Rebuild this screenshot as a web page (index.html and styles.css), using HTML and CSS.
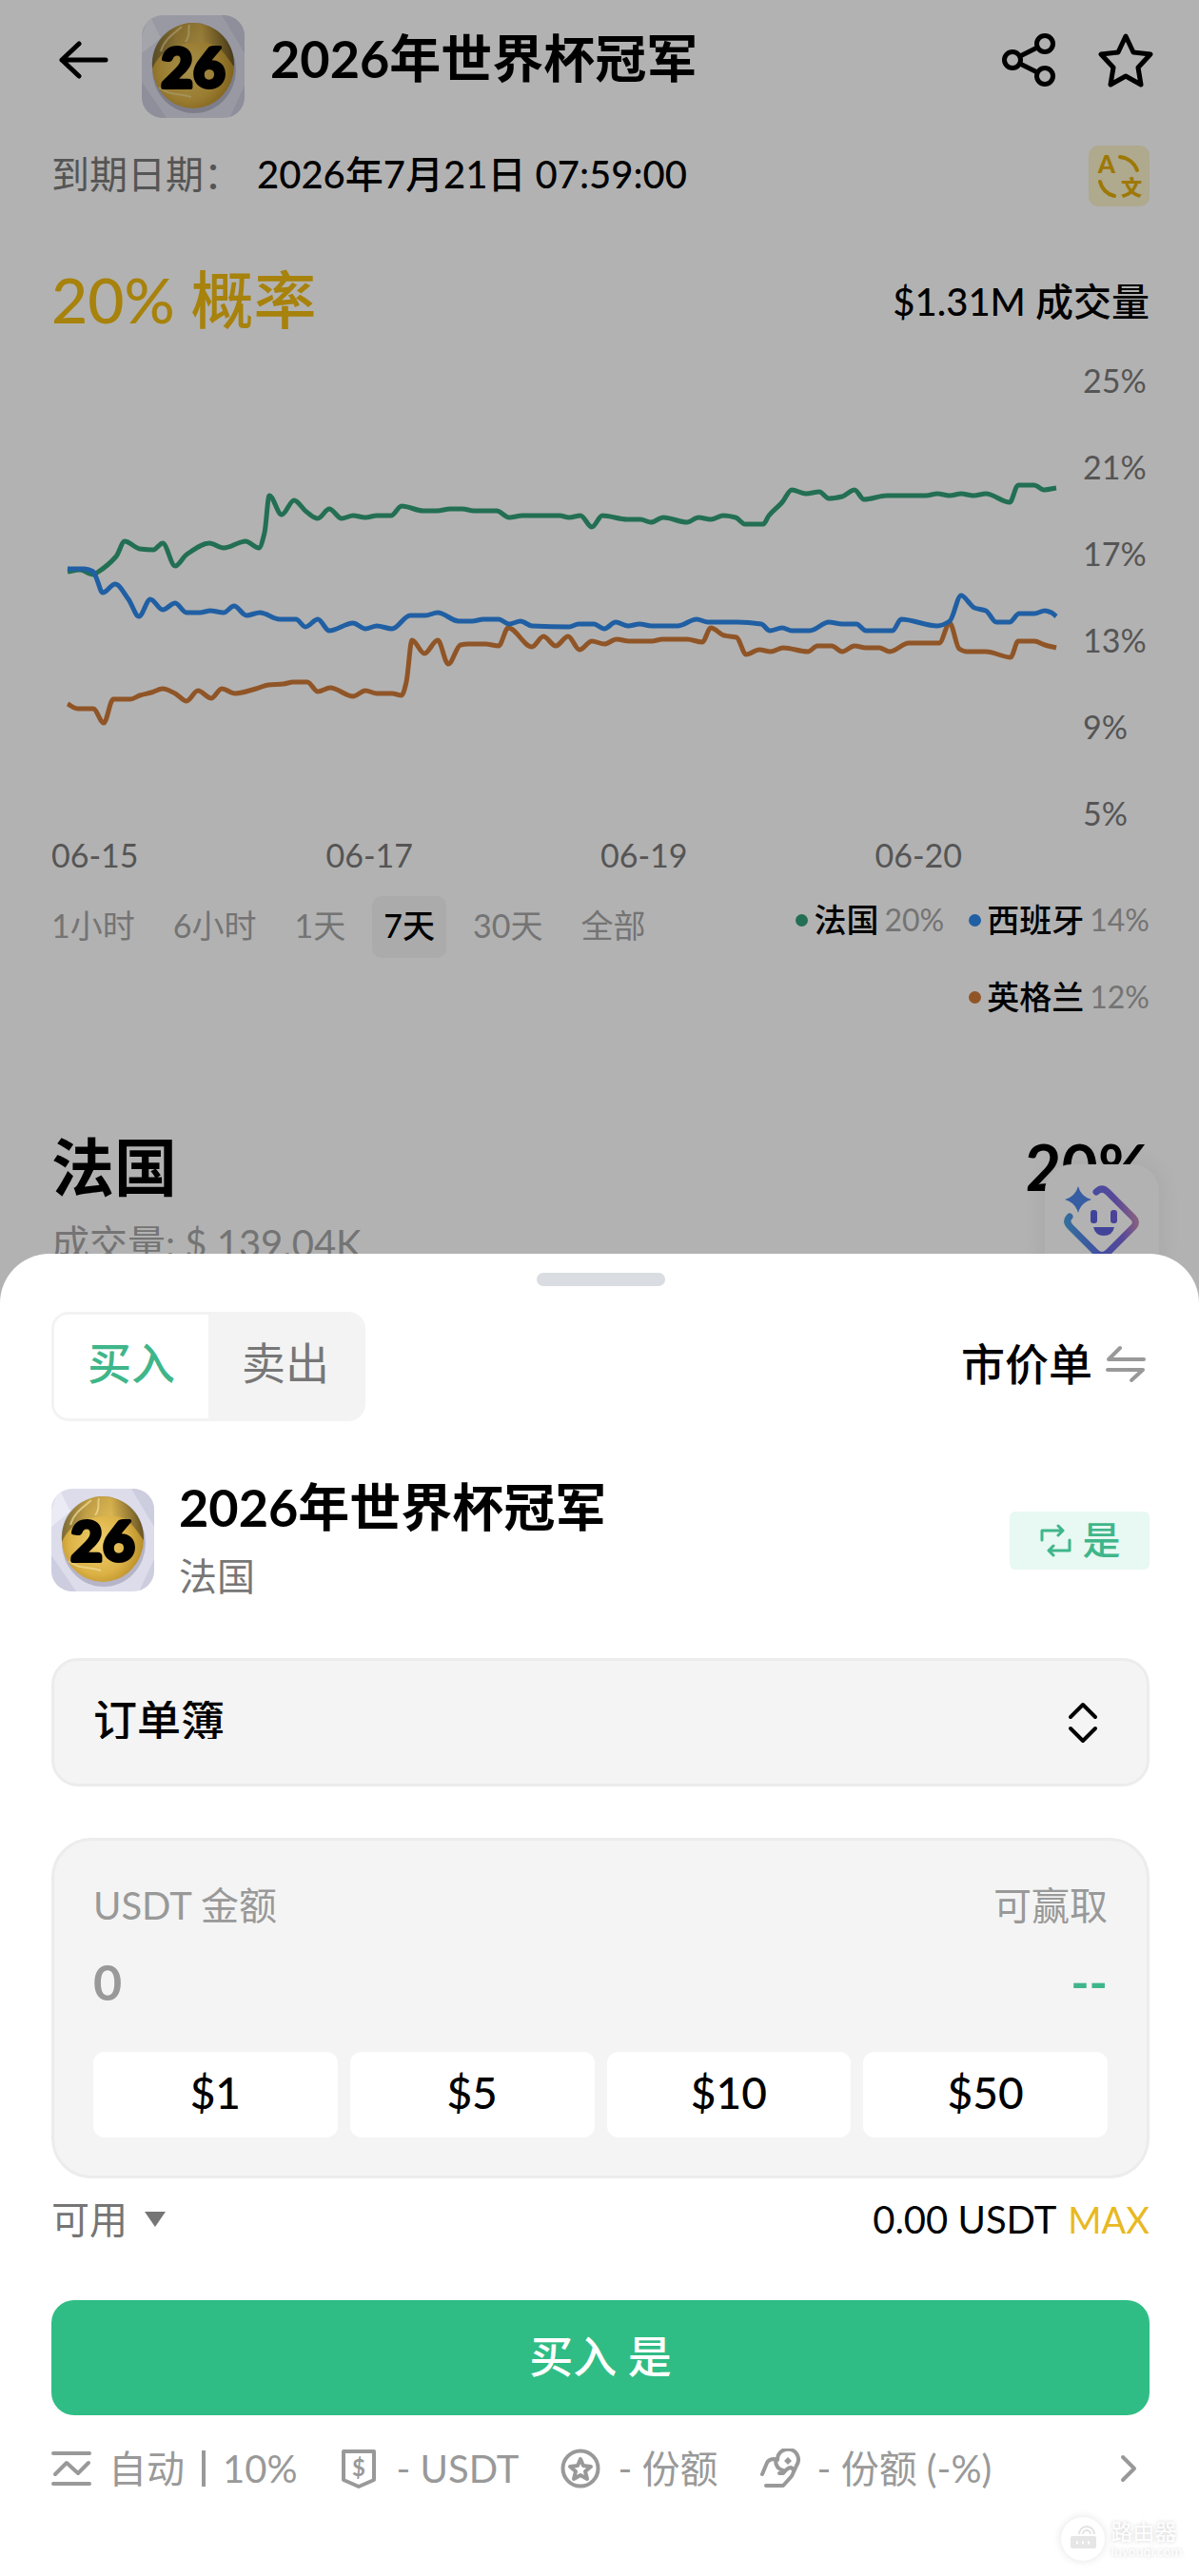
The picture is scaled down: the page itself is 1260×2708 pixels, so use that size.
FILE: index.html
```html
<!DOCTYPE html>
<html lang="zh-CN">
<head>
<meta charset="utf-8">
<meta name="viewport" content="width=device-width, initial-scale=1">
<title>2026年世界杯冠军</title>
<link rel="stylesheet" href="styles.css">
</head>
<body>
<svg class="defs" width="0" height="0" aria-hidden="true">
  <defs>
    <radialGradient id="gold" cx="45%" cy="55%" r="60%">
      <stop offset="0" stop-color="#f0cf6c"/>
      <stop offset="0.6" stop-color="#dcb246"/>
      <stop offset="0.9" stop-color="#b98f2a"/>
      <stop offset="1" stop-color="#6b4d12"/>
    </radialGradient>
    <linearGradient id="shade" x1="0" y1="0" x2="1" y2="0">
      <stop offset="0" stop-color="#5b5334"/>
      <stop offset="0.3" stop-color="#b89a48"/>
      <stop offset="0.6" stop-color="#dab758"/>
      <stop offset="1" stop-color="#473c1f"/>
    </linearGradient>
    <symbol id="ball" viewBox="0 0 108 108">
      <rect width="108" height="108" fill="#dcdcea"/>
      <path d="M0 70L26 108H0zM84 0h24v40zM92 108l16-34v34z" fill="#cdcde0"/>
      <path d="M8 0l12 24L0 40V22z" fill="#ebebf5"/>
      <ellipse cx="55" cy="57" rx="44" ry="46" fill="#8d8ba6" opacity="0.5"/>
      <ellipse cx="54" cy="53" rx="43" ry="45" fill="url(#gold)"/>
      <path d="M11 56C9 28 28 9 54 8c26 1 44 20 43 46-8-10-14-24-30-25-22-2-46 4-56 27z" fill="url(#shade)" opacity="0.7"/>
      <path d="M42 12c-6 6-18 12-22 26M50 10c-2 6 2 10-4 18M18 76c10 8 20 6 34 10" fill="none" stroke="#f1dc98" stroke-width="2" opacity="0.7"/>
      <text x="54" y="76" text-anchor="middle" class="ball-text">26</text>
    </symbol>
  </defs>
</svg>

<div class="app">
  <main class="market">
    <header class="topbar">
      <button class="icon-btn back" type="button" aria-label="返回">
        <svg width="52" height="40" viewBox="0 0 52 40"><path d="M49 20H3M21 3L3 20l18 17" fill="none" stroke="#000" stroke-width="5" stroke-linecap="round" stroke-linejoin="round"/></svg>
      </button>
      <svg class="avatar" aria-hidden="true"><use href="#ball"/></svg>
      <h1 class="title">2026年世界杯冠军</h1>
      <button class="icon-btn" type="button" aria-label="分享">
        <svg width="58" height="58" viewBox="0 0 58 58" fill="none" stroke="#000" stroke-width="5"><circle cx="12" cy="29" r="8.5"/><circle cx="46" cy="12" r="8.5"/><circle cx="46" cy="46" r="8.5"/><path d="M20 25l18-9M20 33l18 9"/></svg>
      </button>
      <button class="icon-btn star" type="button" aria-label="收藏">
        <svg width="58" height="58" viewBox="0 0 58 58"><path d="M29 4l8 17 18 2-13 14 3 18-16-9-16 9 3-18L3 23l18-2z" fill="none" stroke="#000" stroke-width="5" stroke-linejoin="round"/></svg>
      </button>
    </header>

    <div class="expiry">
      <span class="expiry-label">到期日期：</span>
      <time datetime="2026-07-21T07:59:00">2026年7月21日 07:59:00</time>
      <button class="translate" type="button" aria-label="翻译">
        <svg width="64" height="64" viewBox="0 0 64 64">
          <text x="19" y="29" text-anchor="middle" class="glyph-a">A</text>
          <text x="45" y="52" text-anchor="middle" class="glyph-w">文</text>
          <path d="M33 12c8 1 15 6 18 14M12 38c2 8 7 13 15 15" fill="none" stroke="#e2ad0a" stroke-width="4" stroke-linecap="round"/>
        </svg>
      </button>
    </div>

    <div class="headline">
      <strong class="chance">20% 概率</strong>
      <span class="volume">$1.31M 成交量</span>
    </div>

    <div class="chart">
      <svg class="plot" viewBox="54 380 1056 496" preserveAspectRatio="none" role="img" aria-label="概率走势">
        <path class="line green" data-series="france"/>
        <path class="line orange" data-series="england"/>
        <path class="line blue" data-series="spain"/>
      </svg>
      <div class="y-axis"><span>25%</span><span>21%</span><span>17%</span><span>13%</span><span>9%</span><span>5%</span></div>
    </div>
    <div class="x-axis"><span>06-15</span><span>06-17</span><span>06-19</span><span>06-20</span></div>

    <div class="controls">
      <div class="ranges">
        <button type="button">1小时</button><button type="button">6小时</button><button type="button">1天</button><button type="button" class="active">7天</button><button type="button">30天</button><button type="button">全部</button>
      </div>
      <ul class="legend">
        <li><i class="dot green"></i><b>法国</b><span>20%</span></li>
        <li><i class="dot blue"></i><b>西班牙</b><span>14%</span></li>
        <li><i class="dot orange"></i><b>英格兰</b><span>12%</span></li>
      </ul>
    </div>

    <section class="outcome">
      <div class="outcome-row"><h2>法国</h2><strong>20%</strong></div>
      <p>成交量: $ 139.04K</p>
      <button class="assistant" type="button" aria-label="助手">
        <svg width="84" height="84" viewBox="0 0 84 84">
          <defs><linearGradient id="ai" x1="0" y1="0.6" x2="1" y2="0.4"><stop offset="0" stop-color="#4a9fe0"/><stop offset="0.4" stop-color="#5f6fe6"/><stop offset="0.75" stop-color="#7e68dc"/><stop offset="1" stop-color="#c08ab8"/></linearGradient></defs>
          <path d="M36 11q6-6 12 0l27 27q5 5 0 10L48 75q-6 5-12 0L9 48q-6-6-1-11" fill="none" stroke="url(#ai)" stroke-width="7" stroke-linecap="round"/>
          <path d="M17 5q3 11 14 14-11 3-14 14-3-11-14-14 11-3 14-14z" fill="#4f86ea"/>
          <rect x="30" y="30" width="7" height="14" rx="3" fill="#5c62dc"/><rect x="51" y="30" width="7" height="14" rx="3" fill="#6a5fd8"/>
          <path d="M33 48h22q-2 9-11 9t-11-9z" fill="#5f62dc"/>
        </svg>
      </button>
    </section>
  </main>

  <section class="sheet" aria-label="下单">
    <div class="handle"></div>
    <div class="sheet-top">
      <div class="side-toggle"><button type="button" class="on">买入</button><button type="button">卖出</button></div>
      <button class="order-type" type="button">市价单
        <svg width="42" height="40" viewBox="0 0 42 40"><path d="M40 15H3L15 3M2 26h37L27 37" fill="none" stroke="#999" stroke-width="4" stroke-linecap="round" stroke-linejoin="round"/></svg>
      </button>
    </div>

    <div class="asset">
      <svg class="avatar" aria-hidden="true"><use href="#ball"/></svg>
      <div class="asset-name"><h2>2026年世界杯冠军</h2><p>法国</p></div>
      <button class="yes" type="button">
        <svg width="34" height="36" viewBox="0 0 34 36"><path d="M3 18V8h22M20 3l5 5-5 5M32 18v11H10M15 24l-5 5 5 5" fill="none" stroke="#3fb68a" stroke-width="3" stroke-linecap="round" stroke-linejoin="round"/></svg>是
      </button>
    </div>

    <div class="book">
      <select aria-label="订单方式"><option>订单簿</option></select>
      <svg width="32" height="44" viewBox="0 0 32 44" aria-hidden="true"><path d="M3 16L16 3l13 13M3 28l13 13 13-13" fill="none" stroke="#000" stroke-width="4" stroke-linecap="round" stroke-linejoin="round"/></svg>
    </div>

    <div class="amount">
      <div class="amount-row labels"><label for="usdt">USDT 金额</label><span>可赢取</span></div>
      <div class="amount-row values"><input id="usdt" type="text" inputmode="decimal" placeholder="0"><output for="usdt">--</output></div>
      <div class="presets"><button type="button">$1</button><button type="button">$5</button><button type="button">$10</button><button type="button">$50</button></div>
    </div>

    <div class="balance">
      <button class="available" type="button">可用
        <svg width="26" height="18" viewBox="0 0 26 18" aria-hidden="true"><path d="M2 1h22L13 17z" fill="#757575"/></svg>
      </button>
      <div class="funds"><span>0.00 USDT</span><button type="button" class="max">MAX</button></div>
    </div>

    <button class="submit" type="button">买入 是</button>

    <div class="details">
      <span class="detail">
        <svg width="42" height="42" viewBox="0 0 42 42"><path d="M2 5h38M2 37h38M4 27l12-12 12 11 11-11" /></svg>自动<i class="divider"></i>10%
      </span>
      <span class="detail">
        <svg width="42" height="42" viewBox="0 0 42 42"><path d="M5 3h32v30l-16 7-16-7z"/><text x="21" y="29" text-anchor="middle">$</text></svg>- USDT
      </span>
      <span class="detail">
        <svg width="42" height="42" viewBox="0 0 42 42"><circle cx="21" cy="21" r="18.5"/><path d="M21 11l3 7 8 1-6 5 2 8-7-4-7 4 2-8-6-5 8-1z"/></svg>- 份额
      </span>
      <span class="detail">
        <svg width="42" height="42" viewBox="0 0 42 42"><path d="M2 27l5-12q2-4 8-4M18 12a11 11 0 1 1 20 6l-5 11-9 10H6M16 12q0 9 8 11M20 26h4q8-10 11-3"/><path d="M29 9l4 4-4 4-4-4z" class="solid"/></svg>- 份额 (-%)
      </span>
      <button class="icon-btn more" type="button" aria-label="更多">
        <svg width="20" height="32" viewBox="0 0 20 32"><path d="M4 4l12 12L4 28"/></svg>
      </button>
    </div>
  </section>

  <div class="watermark">
    <svg width="46" height="46" viewBox="0 0 46 46"><circle cx="23" cy="23" r="22" fill="#fff"/><rect x="10" y="20" width="27" height="13" rx="2" fill="#e6e6e6"/><path d="M19 18a8 8 0 0 1 16 0M23 18a4 4 0 0 1 8 0" fill="none" stroke="#e2e2e2" stroke-width="2"/><path d="M16 27h2M22 27h2M28 27h2" stroke="#fff" stroke-width="3"/></svg>
    <div><b>路由器</b><span>luyouqi.com</span></div>
  </div>
</div>
<script src="chart.js"></script>
</body>
</html>
```
FILE: styles.css
```css
* { box-sizing: border-box; margin: 0; padding: 0; }

body {
  background: #fff;
  color: #000;
  font-family: Lato, "Noto Sans CJK SC", sans-serif;
  font-size: 40px;
  line-height: 40px;
}

button, input, select {
  font: inherit;
  color: inherit;
  background: none;
  border: 0;
  cursor: pointer;
}

button { white-space: nowrap; }
svg { display: block; flex: none; }
.defs { position: absolute; }

/* The market page and the order sheet share one cell; the sheet rests on the bottom. */
.app { display: grid; min-height: 100vh; position: relative; }
.market, .sheet { grid-area: 1 / 1; min-width: 0; }
.sheet { align-self: end; }

.market { position: relative; padding: 16px 52px 0 54px; background: #fff; overflow: hidden; }
.market::after { content: ""; position: absolute; inset: 0; background: rgba(0, 0, 0, 0.3); }

.icon-btn { display: flex; align-items: center; }
.avatar { width: 108px; height: 108px; border-radius: 22px; }
.ball-text { font: 900 58px Lato, sans-serif; fill: #000; stroke: #000; stroke-width: 4px; stroke-linejoin: round; }

.expiry time, .volume, .chance, .presets button { font-family: "Lato Medium", Lato, "Noto Sans CJK SC", sans-serif; font-weight: 500; }

.topbar { display: flex; align-items: center; height: 108px; padding-left: 8px; margin-right: -4px; }
.back { margin-right: 35px; }
.title { flex: 1; margin-left: 27px; padding-bottom: 16px; font-size: 54px; line-height: 90px; font-weight: 700; }
.star { margin-left: 44px; }
.topbar .icon-btn { padding-bottom: 14px; }

.expiry { display: flex; align-items: center; margin-top: 28px; height: 65px; }
.expiry-label, .expiry time { padding-bottom: 4px; }
.expiry-label { margin-right: 16px; color: #7a7a7a; }
.translate { margin-left: auto; border-radius: 10px; background: #fbf3cb; }
.glyph-a { font: 900 26px Lato, sans-serif; fill: #e2ad0a; }
.glyph-w { font: 900 22px "Noto Sans CJK SC", sans-serif; fill: #e2ad0a; }

.headline { display: flex; align-items: center; justify-content: space-between; margin-top: 56px; line-height: 80px; }
.chance { font-size: 66px; color: #f0bb12; }
.volume { padding-top: 4px; }

.chart { display: flex; gap: 28px; margin-top: 23px; }
.plot { flex: 1 1 0; min-width: 0; align-self: stretch; height: auto; overflow: visible; }
.line { fill: none; stroke-width: 5px; vector-effect: non-scaling-stroke; stroke-linejoin: round; }
.line.green { stroke: #339f79; }
.line.blue { stroke: #2f89ea; }
.line.orange { stroke: #cf7a38; }
.y-axis { display: flex; flex-direction: column; gap: 51px; width: 70px; font-size: 34px; color: #7a7a7a; }
.x-axis { display: grid; grid-template-columns: repeat(4, 1fr); margin-top: 3px; font-size: 34px; color: #7a7a7a; }

.controls { display: flex; justify-content: space-between; align-items: flex-start; margin-top: 23px; }
.ranges { display: flex; gap: 16px; margin-left: -12px; font-size: 34px; color: #a6a6a6; }
.ranges button { height: 65px; padding: 0 12px 4px; border-radius: 10px; }
.ranges .active { background: #f5f5f5; color: #000; font-weight: 500; }
.legend { display: flex; flex-wrap: wrap; justify-content: flex-end; gap: 41px 26px; width: 400px; margin-top: 5px; list-style: none; font-size: 34px; }
.legend li { display: flex; align-items: center; }
.legend b { font-weight: 500; margin: 0 6px; }
.legend span { color: #a6a6a6; font-size: 32px; }
.dot { width: 13px; height: 13px; border-radius: 50%; }
.dot.green { background: #339f79; }
.dot.blue { background: #2f89ea; }
.dot.orange { background: #cf7a38; }

.outcome { position: relative; margin-top: 119px; }
.outcome-row { display: flex; justify-content: space-between; line-height: 80px; }
.outcome-row h2, .outcome-row strong { font-size: 66px; font-weight: 700; }
.outcome p { margin-top: 20px; color: #a6a6a6; }
.assistant { position: absolute; right: -10px; top: 37px; width: 120px; height: 120px; padding: 18px; border-radius: 28px; background: #fff; box-shadow: 0 0 24px rgba(0, 0, 0, 0.08); }

.sheet { position: relative; z-index: 1; padding: 20px 52px 92px 54px; border-radius: 52px 52px 0 0; background: #fff; }
.handle { width: 135px; height: 14px; margin: 0 auto; border-radius: 7px; background: #d9dce0; }

.sheet-top { display: flex; align-items: center; justify-content: space-between; margin-top: 27px; font-size: 46px; }
.side-toggle { display: flex; width: 330px; height: 115px; border: 3px solid #f3f3f3; border-radius: 18px; overflow: hidden; }
.side-toggle button { flex: 1; padding-bottom: 8px; background: #f3f3f3; color: #777; }
.side-toggle .on { background: #fff; color: #3fb68a; font-weight: 500; }
.order-type { display: flex; align-items: center; gap: 14px; padding: 0 4px 6px 0; font-weight: 500; }

.asset { display: flex; align-items: center; margin-top: 62px; }
.asset-name { flex: 1; margin-left: 26px; }
.asset-name h2 { font-size: 54px; line-height: 58px; font-weight: 700; }
.asset-name p { margin-top: 18px; line-height: 50px; color: #777; }
.yes { display: flex; align-items: center; justify-content: center; gap: 12px; width: 147px; height: 61px; border-radius: 6px; background: #e8f8f2; color: #3fb68a; font-weight: 500; }

.book { display: flex; align-items: center; height: 135px; margin-top: 61px; padding: 0 51px 0 41px; border: 3px solid #ececec; border-radius: 28px; background: #f4f4f4; }
.book select { flex: 1; height: 100%; padding-bottom: 6px; appearance: none; font-size: 46px; font-weight: 500; }

.amount { margin-top: 54px; padding: 48px 41px 40px; border: 3px solid #ececec; border-radius: 42px; background: #f4f4f4; }
.amount-row { display: flex; justify-content: space-between; }
.labels { color: #999; }
.values { margin-top: 30px; font-size: 52px; line-height: 60px; font-weight: 700; }
.values input { flex: 1; min-width: 0; height: 60px; cursor: text; }
.values input::placeholder { color: #999; opacity: 1; }
.values output { color: #3fb68a; }
.presets { display: grid; grid-template-columns: repeat(4, 1fr); gap: 13px; margin-top: 44px; }
.presets button { height: 90px; padding-bottom: 4px; border-radius: 12px; background: #fff; font-size: 46px; }

.balance { display: flex; justify-content: space-between; margin-top: 23px; }
.available { display: flex; align-items: center; gap: 16px; color: #757575; }
.funds { display: flex; align-items: baseline; gap: 12px; }
.max { color: #e8b923; font-size: 38px; }

.submit { display: block; width: 100%; height: 121px; margin-top: 65px; padding-bottom: 4px; border-radius: 24px; background: #2fbd85; color: #fff; font-size: 46px; font-weight: 500; }

.details { display: flex; align-items: center; gap: 44px; margin-top: 35px; color: #999; white-space: nowrap; }
.detail { display: flex; align-items: center; gap: 18px; }
.divider { width: 4px; height: 38px; background: #999; }
.details svg { fill: none; stroke: #999; stroke-width: 4px; stroke-linecap: round; stroke-linejoin: round; }
.details text { font: 700 24px Lato, sans-serif; fill: #999; stroke: none; }
.details .solid { fill: #999; stroke: none; }
.more { margin-left: auto; padding-right: 12px; }

.watermark { position: absolute; z-index: 2; right: 18px; bottom: 16px; display: flex; align-items: center; gap: 7px; color: #fff; text-shadow: 0 0 4px #ccc; }
.watermark svg { border-radius: 50%; box-shadow: 0 0 10px #e2e2e2; }
.watermark b { display: block; font-size: 23px; line-height: 26px; font-weight: 400; }
.watermark span { display: block; font-size: 14px; line-height: 16px; }
```
FILE: chart.js
```js
// Plot points, in the units of the chart's viewBox.
const series = {
  france: [71,601,84,599,98,604,102,602,122,585,131,569,147,577,161,578,171,571,184,595,196,583,220,571,235,576,258,569,272,576,278,560,283,521,296,541,309,526,322,538,334,545,346,535,359,545,371,542,384,544,396,542,411,542,422,532,445,537,459,537,473,535,486,535,498,537,522,537,535,544,549,542,588,542,598,544,610,542,622,554,633,542,659,546,673,546,684,549,697,544,722,549,734,544,747,546,760,542,773,544,783,551,802,551,808,542,822,528,832,515,847,519,861,517,871,524,885,522,898,515,908,525,932,521,973,521,985,519,998,521,1010,519,1023,521,1036,519,1061,528,1070,510,1087,510,1097,515,1110,513],
  spain: [71,598,88,598,98,601,101,607,108,623,121,614,135,630,146,648,158,630,171,641,184,634,196,644,210,644,221,642,235,644,246,637,259,647,273,644,294,651,311,651,321,659,334,651,346,663,371,655,384,661,396,658,412,661,431,647,447,647,460,644,482,653,496,653,508,651,524,651,535,656,547,653,559,658,598,659,608,656,624,656,635,661,647,654,660,658,672,656,685,658,712,658,732,651,744,654,775,654,800,656,809,663,822,660,832,663,851,663,871,654,885,656,900,656,910,663,938,663,947,651,985,658,998,653,1010,626,1024,639,1036,642,1047,654,1061,654,1071,645,1087,645,1098,642,1105,644,1110,648],
  england: [71,740,82,745,98,745,109,760,119,735,137,735,147,731,159,728,171,724,184,729,196,737,208,726,222,734,233,724,247,729,269,724,282,720,298,719,308,717,323,717,334,727,347,723,371,732,384,726,396,729,412,729,422,731,427,717,433,673,446,687,460,673,471,698,484,678,492,677,510,677,524,679,534,660,559,680,571,669,584,679,597,669,609,683,622,674,635,677,648,672,661,674,685,674,696,672,722,672,738,675,747,660,761,668,774,670,784,688,798,683,810,685,823,681,849,685,859,679,874,679,885,685,898,679,910,681,924,681,935,685,955,676,987,676,998,655,1008,682,1016,685,1036,685,1062,691,1070,674,1087,674,1098,678,1110,681]
};

// Monotone cubic interpolation: smooth, with no overshoot at peaks.
function monotonePath(flat) {
  const p = [];
  for (let i = 0; i < flat.length; i += 2) p.push([flat[i], flat[i + 1]]);
  const slope = p.slice(1).map((q, i) => (q[1] - p[i][1]) / (q[0] - p[i][0]));
  const tangent = p.map((_, i) => {
    if (i === 0) return slope[0];
    if (i === p.length - 1) return slope[i - 1];
    const a = slope[i - 1], b = slope[i];
    return a * b <= 0 ? 0 : (2 * a * b) / (a + b);
  });
  let d = `M${p[0][0]} ${p[0][1]}`;
  for (let i = 1; i < p.length; i++) {
    const h = (p[i][0] - p[i - 1][0]) / 3;
    d += `C${p[i - 1][0] + h} ${p[i - 1][1] + h * tangent[i - 1]} ${p[i][0] - h} ${p[i][1] - h * tangent[i]} ${p[i][0]} ${p[i][1]}`;
  }
  return d;
}

document.querySelectorAll("[data-series]").forEach((path) => {
  path.setAttribute("d", monotonePath(series[path.dataset.series]));
});
```
